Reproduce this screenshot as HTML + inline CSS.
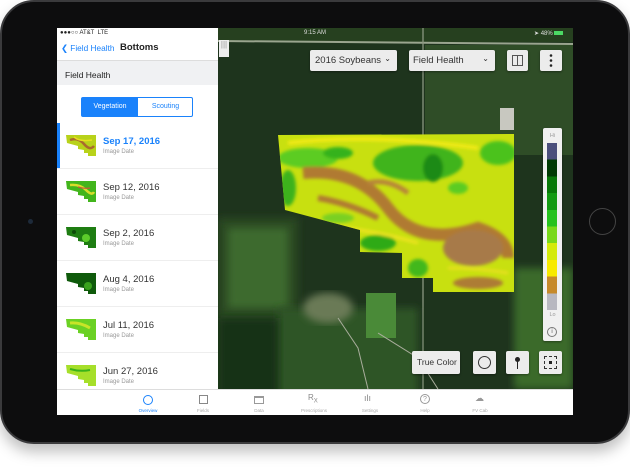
<!DOCTYPE html>
<html><head><meta charset="utf-8"><style>
*{margin:0;padding:0;box-sizing:border-box}
body{width:630px;height:475px;background:#fff;position:relative;overflow:hidden;font-family:"Liberation Sans",sans-serif}
.ipad{position:absolute;left:0;top:0;width:630px;height:444px;background:#0d0d0e;border-radius:34px;box-shadow:0 8px 14px rgba(0,0,0,.25);border:2px solid #3a3a3c}
.screen{position:absolute;left:57px;top:28px;width:516px;height:387px;background:#fff;overflow:hidden}
.side{position:absolute;left:0;top:0;width:161px;height:361px;background:#fff}
.map{position:absolute;left:161px;top:0;width:355px;height:361px;background:#1f3520;overflow:hidden}
.tab{position:absolute;left:0;top:361px;width:516px;height:26px;background:#fff;border-top:1px solid #ddd}
.t{position:absolute;font-size:4.5px;color:#aaa;text-align:center;width:50px}
.btn{position:absolute;background:#ececec;border-radius:2px;box-shadow:0 1px 2px rgba(0,0,0,.4);font-size:9.5px;color:#333}
.item{position:absolute;left:0;width:161px;height:46px;border-bottom:1px solid #eee}
.item .d{position:absolute;left:46px;top:13px;font-size:9.5px;color:#333}
.item .s{position:absolute;left:46px;top:26px;font-size:6px;color:#999}
.item svg{position:absolute;left:9px;top:11px}
</style></head><body>
<div class="ipad"></div>
<div style="position:absolute;left:28px;top:219px;width:5px;height:5px;border-radius:50%;background:#1d2a3a"></div>
<div style="position:absolute;left:589px;top:208px;width:27px;height:27px;border-radius:50%;border:1.5px solid #444"></div>
<div class="screen">
 <div class="side">
  <div style="position:absolute;left:3px;top:2px;font-size:6px;color:#222">●●●○○ AT&amp;T &nbsp;LTE</div>
  <div style="position:absolute;left:4px;top:15px;font-size:8.3px;color:#1a82fb">&#10094; Field Health</div>
  <div style="position:absolute;left:63px;top:14px;font-size:9.5px;font-weight:bold;color:#222">Bottoms</div>
  <div style="position:absolute;left:0;top:32px;width:161px;height:25px;background:#f0f1f3;border-top:1px solid #ddd;font-size:8.5px;color:#222;padding:9px 0 0 8px">Field Health</div>
  <div style="position:absolute;left:24px;top:69px;width:112px;height:20px;border:1px solid #1a82fb;border-radius:2px;font-size:7px">
   <div style="position:absolute;left:0;top:0;width:56px;height:18px;background:#1a82fb;color:#fff;text-align:center;line-height:18px">Vegetation</div>
   <div style="position:absolute;left:56px;top:0;width:55px;height:18px;color:#1a82fb;text-align:center;line-height:18px">Scouting</div>
  </div>
  <div style="position:absolute;left:0;top:95px;width:3px;height:46px;background:#1a82fb"></div>
  <div class="item" style="top:95px"><svg width="30" height="22" viewBox="0 0 30 22"><polygon points="0,1 30,1 30,22 22,22 22,19 18,19 18,16 12,15 12,12 1,9" fill="#b8d21a"/><path d="M4 6 Q12 3 18 10 T28 12" stroke="#a96b2e" stroke-width="2.5" fill="none"/><path d="M8 3 Q14 8 26 6" stroke="#e6e020" stroke-width="1.5" fill="none"/></svg><div class="d" style="color:#1a82fb;font-weight:bold">Sep 17, 2016</div><div class="s">Image Date</div></div>
  <div class="item" style="top:141px"><svg width="30" height="22" viewBox="0 0 30 22"><polygon points="0,1 30,1 30,22 22,22 22,19 18,19 18,16 12,15 12,12 1,9" fill="#42b51c"/><path d="M4 5 Q14 4 20 10 T28 12" stroke="#d8dc2a" stroke-width="2.5" fill="none"/><path d="M12 7 Q18 9 24 8" stroke="#c25a3a" stroke-width="1.2" fill="none"/></svg><div class="d">Sep 12, 2016</div><div class="s">Image Date</div></div>
  <div class="item" style="top:187px"><svg width="30" height="22" viewBox="0 0 30 22"><polygon points="0,1 30,1 30,22 22,22 22,19 18,19 18,16 12,15 12,12 1,9" fill="#1e7d12"/><circle cx="20" cy="12" r="4" fill="#5ccc2a"/><circle cx="8" cy="6" r="2" fill="#0c4a08"/></svg><div class="d">Sep 2, 2016</div><div class="s">Image Date</div></div>
  <div class="item" style="top:233px"><svg width="30" height="22" viewBox="0 0 30 22"><polygon points="0,1 30,1 30,22 22,22 22,19 18,19 18,16 12,15 12,12 1,9" fill="#0f5a0b"/><circle cx="22" cy="14" r="4" fill="#3aa21e"/></svg><div class="d">Aug 4, 2016</div><div class="s">Image Date</div></div>
  <div class="item" style="top:279px"><svg width="30" height="22" viewBox="0 0 30 22"><polygon points="0,1 30,1 30,22 22,22 22,19 18,19 18,16 12,15 12,12 1,9" fill="#6bd124"/><path d="M4 5 Q14 4 24 10" stroke="#c8e428" stroke-width="3" fill="none"/></svg><div class="d">Jul 11, 2016</div><div class="s">Image Date</div></div>
  <div class="item" style="top:325px"><svg width="30" height="22" viewBox="0 0 30 22"><polygon points="0,1 30,1 30,22 22,22 22,19 18,19 18,16 12,15 12,12 1,9" fill="#a6df2a"/><path d="M4 5 Q14 8 24 6" stroke="#3ab21a" stroke-width="2" fill="none"/></svg><div class="d">Jun 27, 2016</div><div class="s">Image Date</div></div>
 </div>
 <div class="map">
  <svg width="355" height="361" style="position:absolute;left:0;top:0">
   <defs><filter id="b"><feGaussianBlur stdDeviation="4"/></filter><filter id="b2"><feGaussianBlur stdDeviation="1.5"/></filter>
   <clipPath id="c"><polygon points="60,107 296,106 296,264 215,264 215,250 184,250 184,225 142,224 142,202 67,182"/></clipPath></defs>
   <rect width="355" height="361" fill="#1e341d"/>
   <rect x="0" y="0" width="355" height="14" fill="#26401f"/>
   <line x1="0" y1="13" x2="355" y2="16" stroke="#9aa58f" stroke-width="2"/>
   <line x1="205" y1="0" x2="205" y2="361" stroke="#8a9680" stroke-width="1.3"/>
   <rect x="207" y="17" width="148" height="110" fill="#2f4d27"/>
   <rect x="0" y="190" width="80" height="180" fill="#2a4a22" filter="url(#b)"/>
   <rect x="10" y="200" width="60" height="80" fill="#3d6a2e" filter="url(#b)"/>
   <rect x="60" y="280" width="140" height="90" fill="#2e5526" filter="url(#b)"/>
   <rect x="0" y="290" width="60" height="80" fill="#193216" filter="url(#b)"/>
   <ellipse cx="110" cy="280" rx="25" ry="15" fill="#6b7a56" filter="url(#b)"/>
   <rect x="148" y="265" width="30" height="45" fill="#4a8a38"/>
   <rect x="296" y="240" width="59" height="121" fill="#3a6a2c" filter="url(#b)"/>
   <path d="M120 290 L140 320 L150 361 M160 305 L200 330 L220 361" stroke="#a9ad9c" stroke-width="1" fill="none"/>
   <rect x="282" y="80" width="14" height="22" fill="#c8c8c0"/>
   <g clip-path="url(#c)">
    <rect x="55" y="100" width="245" height="170" fill="#c8e010"/>
    <g filter="url(#b2)">
     <ellipse cx="90" cy="130" rx="30" ry="10" fill="#5ccc22"/>
     <ellipse cx="200" cy="135" rx="45" ry="18" fill="#3fb41a"/>
     <ellipse cx="215" cy="140" rx="10" ry="14" fill="#1a8a12"/>
     <ellipse cx="280" cy="125" rx="18" ry="12" fill="#4cc21e"/>
     <ellipse cx="120" cy="125" rx="15" ry="6" fill="#36b21a"/>
     <path d="M85 145 Q140 140 170 180 T260 200 Q290 210 290 230" stroke="#b07a30" stroke-width="12" fill="none"/>
     <path d="M100 170 Q130 175 160 190" stroke="#b07a30" stroke-width="6" fill="none"/>
     <path d="M150 155 Q170 150 190 165" stroke="#b8843a" stroke-width="5" fill="none"/>
     <ellipse cx="255" cy="220" rx="30" ry="18" fill="#a77a48"/>
     <ellipse cx="260" cy="255" rx="25" ry="6" fill="#ad7c34"/>
     <ellipse cx="160" cy="215" rx="18" ry="8" fill="#2eaa18"/>
     <ellipse cx="200" cy="240" rx="10" ry="9" fill="#42b81c"/>
     <ellipse cx="70" cy="160" rx="8" ry="18" fill="#3eb21c"/>
     <ellipse cx="120" cy="190" rx="16" ry="5" fill="#7ad024"/>
     <ellipse cx="240" cy="160" rx="10" ry="6" fill="#5ccc22"/>
     <path d="M70 115 Q150 105 260 120" stroke="#f2ea18" stroke-width="4" fill="none"/>
     <path d="M80 195 Q150 200 200 215" stroke="#f0e420" stroke-width="3" fill="none"/>
     <path d="M230 240 Q260 240 290 245" stroke="#e8e020" stroke-width="3" fill="none"/>
    </g>
   </g>
  </svg>
  <div style="position:absolute;left:1px;top:12px;width:10px;height:17px;background:#eee;font-size:8px;color:#999;text-align:center">|||</div>
  <div style="position:absolute;left:86px;top:2px;font-size:6px;color:#ddd">9:15 AM</div>
  <div style="position:absolute;left:316px;top:2px;font-size:6px;color:#ddd">➤ 48% <span style="display:inline-block;width:9px;height:4px;background:#4cd964"></span></div>
  <div class="btn" style="left:92px;top:22px;width:87px;height:21px;padding:5px 0 0 5px">2016 Soybeans<span style="position:absolute;right:6px;top:4px;font-size:8px">&#8964;</span></div>
  <div class="btn" style="left:191px;top:22px;width:86px;height:21px;padding:5px 0 0 4px">Field Health<span style="position:absolute;right:6px;top:4px;font-size:8px">&#8964;</span></div>
  <div class="btn" style="left:289px;top:22px;width:21px;height:21px"><div style="position:absolute;left:5px;top:5px;width:11px;height:11px;border:1px solid #555"></div><div style="position:absolute;left:10px;top:5px;width:1px;height:11px;background:#555"></div></div>
  <div class="btn" style="left:322px;top:22px;width:22px;height:21px"><svg width="22" height="21"><circle cx="11" cy="5.5" r="1.3" fill="#222"/><circle cx="11" cy="10.5" r="1.3" fill="#222"/><circle cx="11" cy="15.5" r="1.3" fill="#222"/></svg></div>
  <div class="btn" style="left:325px;top:100px;width:19px;height:213px;background:#f0f0f0">
   <div style="position:absolute;top:5px;width:19px;text-align:center;font-size:5.5px;color:#999">Hi</div>
   <div style="position:absolute;left:4px;top:15px;width:10px;height:167px;background:linear-gradient(#4b4f7c 0 10%,#003a03 10% 20%,#087808 20% 30%,#139a12 30% 40%,#26c21e 40% 50%,#78d81a 50% 60%,#d4ea0a 60% 70%,#f8ea00 70% 80%,#c68a2a 80% 90%,#b8b8c0 90%)"></div>
   <div style="position:absolute;top:184px;width:19px;text-align:center;font-size:5.5px;color:#999">Lo</div>
   <div style="position:absolute;left:4px;top:199px;width:10px;height:10px;border:1px solid #777;border-radius:50%;font-size:6px;text-align:center;line-height:8px;color:#555">i</div>
  </div>
  <div class="btn" style="left:194px;top:323px;width:48px;height:23px;padding:6px 0 0 5px;font-size:8.5px">True Color</div>
  <div class="btn" style="left:255px;top:323px;width:23px;height:23px"><div style="position:absolute;left:5px;top:5px;width:13px;height:13px;border:1.2px solid #333;border-radius:50%"></div></div>
  <div class="btn" style="left:288px;top:323px;width:23px;height:23px"><div style="position:absolute;left:9px;top:6px;width:5px;height:5px;background:#222;border-radius:50%"></div><div style="position:absolute;left:11px;top:10px;width:1px;height:8px;background:#222"></div></div>
  <div class="btn" style="left:321px;top:323px;width:23px;height:23px"><div style="position:absolute;left:5px;top:5px;width:13px;height:13px;border:1.2px dashed #333"></div><div style="position:absolute;left:10px;top:10px;width:3px;height:3px;background:#222"></div></div>
 </div>
 <div class="tab">
  <div style="position:absolute;left:86px;top:5px;width:10px;height:10px;border:1.3px solid #1a82fb;border-radius:50%"></div>
  <div class="t" style="left:66px;top:18px;color:#1a82fb">Overview</div>
  <div style="position:absolute;left:142px;top:5px;width:9px;height:9px;border:1px solid #888"></div><div class="t" style="left:121px;top:18px">Fields</div>
  <div style="position:absolute;left:197px;top:6px;width:10px;height:8px;border:1px solid #999;border-top-width:2px"></div><div class="t" style="left:177px;top:18px">Data</div>
  <div style="position:absolute;left:251px;top:3px;font-size:8px;color:#888">R<sub style="font-size:6px">X</sub></div><div class="t" style="left:232px;top:18px">Prescriptions</div>
  <div style="position:absolute;left:307px;top:3px;font-size:9px;color:#888">ılı</div><div class="t" style="left:288px;top:18px">Settings</div>
  <div style="position:absolute;left:363px;top:4px;width:10px;height:10px;border:1px solid #999;border-radius:50%;font-size:7px;text-align:center;line-height:9px;color:#999">?</div><div class="t" style="left:343px;top:18px">Help</div>
  <div style="position:absolute;left:418px;top:3px;font-size:9px;color:#999">☁</div><div class="t" style="left:398px;top:18px">FV Cab</div>
 </div>
</div>
</body></html>
